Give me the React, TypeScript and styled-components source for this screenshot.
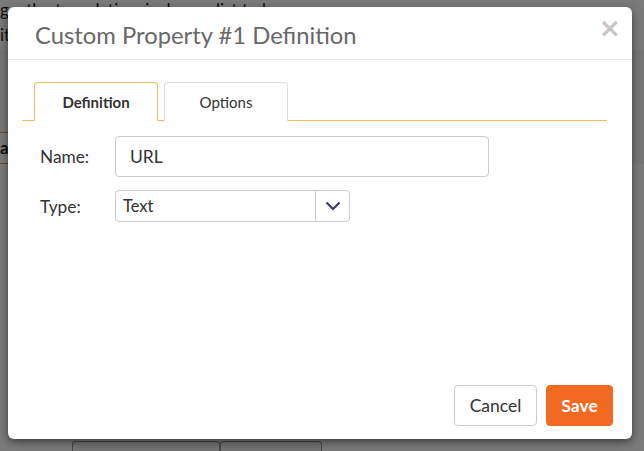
import React from "react";
import styled, { createGlobalStyle } from "styled-components";

const Global = createGlobalStyle`
  html, body { margin: 0; padding: 0; width: 644px; height: 451px; overflow: hidden; }
  body { font-family: Lato, "Liberation Sans", sans-serif; background: #fff; }
  * { box-sizing: border-box; }
`;

const Page = styled.div`
  width: 644px;
  height: 451px;
  position: relative;
  background: #f6f6f6;
  color: #222;
  font-size: 17px;
  display: flex;
  flex-direction: column;
`;

const PageLine = styled.div`
  height: 25px;
  line-height: 20px;
  white-space: nowrap;
  background: #fff;
`;

const PageRow = styled.div`
  margin-top: 82px;
  height: 32px;
  border-top: 1px solid #d9a55a;
  border-bottom: 1px solid #d9a55a;
  width: 60px;
  line-height: 30px;
  font-weight: bold;
  background: #fff;
`;

const PageFill = styled.div`
  flex: 1;
  display: flex;
  align-items: flex-end;
  padding-left: 72px;
  background: #fff;
`;

const PageTab = styled.div<{ $w: number }>`
  width: ${(p) => p.$w}px;
  height: 10px;
  border: 1px solid #999;
  border-bottom: none;
  border-radius: 3px 3px 0 0;
  background: #f0f0f0;
`;

const Overlay = styled.div`
  position: absolute;
  inset: 0;
  background: rgba(0, 0, 0, 0.52);
`;

const Modal = styled.div`
  position: absolute;
  left: 8px;
  top: 7px;
  width: 624px;
  height: 432px;
  background: #fff;
  border-radius: 6px;
  box-shadow: 0 3px 9px rgba(0, 0, 0, 0.5);
  display: flex;
  flex-direction: column;
`;

const Header = styled.div`
  height: 53px;
  flex-shrink: 0;
  border-bottom: 1px solid #e5e5e5;
  display: flex;
  align-items: center;
  padding: 4px 0 0 27px;
  position: relative;
`;

const Title = styled.h4`
  margin: 0;
  font-size: 23.8px;
  font-weight: 400;
  color: #686868;
`;

const Close = styled.span`
  position: absolute;
  right: 11px;
  top: 5px;
  font-size: 27px;
  font-weight: 700;
  color: #c7c7c7;
  font-family: "DejaVu Sans", sans-serif;
`;

const Body = styled.div`
  flex: 1;
  padding: 22px 25px 0 14px;
`;

const TabList = styled.div`
  display: flex;
  gap: 6px;
  padding-left: 12px;
  border-bottom: 1px solid #f3bc5f;
  height: 39px;
`;

const Tab = styled.div<{ $active?: boolean }>`
  width: 124px;
  height: 39px;
  margin-bottom: ${(p) => (p.$active ? "-1px" : "0")};
  border: 1px solid ${(p) => (p.$active ? "#f3bc5f" : "#ddd")};
  border-bottom: ${(p) => (p.$active ? "1px solid #fff" : "none")};
  border-radius: 4px 4px 0 0;
  background: #fff;
  display: flex;
  align-items: center;
  justify-content: center;
  padding-top: ${(p) => (p.$active ? "1px" : "0")};
  font-size: 15px;
  font-weight: ${(p) => (p.$active ? 700 : 400)};
  color: #333;
`;

const Form = styled.div`
  padding: 15px 0 0 18px;
  display: flex;
  flex-direction: column;
  gap: 13px;
`;

const Row = styled.div`
  display: flex;
  align-items: center;
`;

const Label = styled.label`
  width: 75px;
  font-size: 17.3px;
  color: #333;
`;

const Input = styled.div`
  width: 374px;
  height: 41px;
  border: 1px solid #ccc;
  border-radius: 4px;
  display: flex;
  align-items: center;
  padding-left: 14px;
  font-size: 17.5px;
  color: #333;
`;

const Select = styled.div`
  width: 235px;
  height: 32px;
  border: 1px solid #ccc;
  border-radius: 4px;
  display: flex;
  align-items: stretch;
`;

const SelectValue = styled.div`
  flex: 1;
  display: flex;
  align-items: center;
  padding-left: 7px;
  font-size: 16.5px;
  color: #333;
`;

const SelectArrow = styled.div`
  width: 34px;
  border-left: 1px solid #ccc;
  display: flex;
  align-items: center;
  justify-content: center;
`;

const Footer = styled.div`
  display: flex;
  justify-content: flex-end;
  gap: 9px;
  padding: 0 19px 13px 0;
`;

const Button = styled.button<{ $primary?: boolean }>`
  height: 41px;
  width: ${(p) => (p.$primary ? 67 : 83)}px;
  padding: 0;
  border-radius: 4px;
  border: 1px solid ${(p) => (p.$primary ? "#f26922" : "#ccc")};
  background: ${(p) => (p.$primary ? "#f26922" : "#fff")};
  color: ${(p) => (p.$primary ? "#fff" : "#333")};
  font-family: Lato, "Liberation Sans", sans-serif;
  font-size: 17.5px;
  font-weight: ${(p) => (p.$primary ? 700 : 400)};
`;

export default function App() {
  return (
    <>
      <Global />
      <Page>
        <PageLine>
          g&nbsp;&nbsp;&nbsp;&nbsp;the t&nbsp;&nbsp;&nbsp;&nbsp;nslatin&nbsp;&nbsp;&nbsp;&nbsp;is done&nbsp;&nbsp;&nbsp;&nbsp;list to be
        </PageLine>
        <PageLine>it</PageLine>
        <PageRow>a</PageRow>
        <PageFill>
          <PageTab $w={148} />
          <PageTab $w={102} />
        </PageFill>
        <Overlay />
        <Modal>
          <Header>
            <Title>Custom Property #1 Definition</Title>
            <Close>×</Close>
          </Header>
          <Body>
            <TabList>
              <Tab $active>Definition</Tab>
              <Tab>Options</Tab>
            </TabList>
            <Form>
              <Row>
                <Label>Name:</Label>
                <Input>URL</Input>
              </Row>
              <Row>
                <Label>Type:</Label>
                <Select>
                  <SelectValue>Text</SelectValue>
                  <SelectArrow>
                    <svg width="16" height="10" viewBox="0 0 16 10">
                      <path d="M1.5 1.5 L8 8 L14.5 1.5" fill="none" stroke="#3a3f5c" strokeWidth="2.2" />
                    </svg>
                  </SelectArrow>
                </Select>
              </Row>
            </Form>
          </Body>
          <Footer>
            <Button>Cancel</Button>
            <Button $primary>Save</Button>
          </Footer>
        </Modal>
      </Page>
    </>
  );
}
